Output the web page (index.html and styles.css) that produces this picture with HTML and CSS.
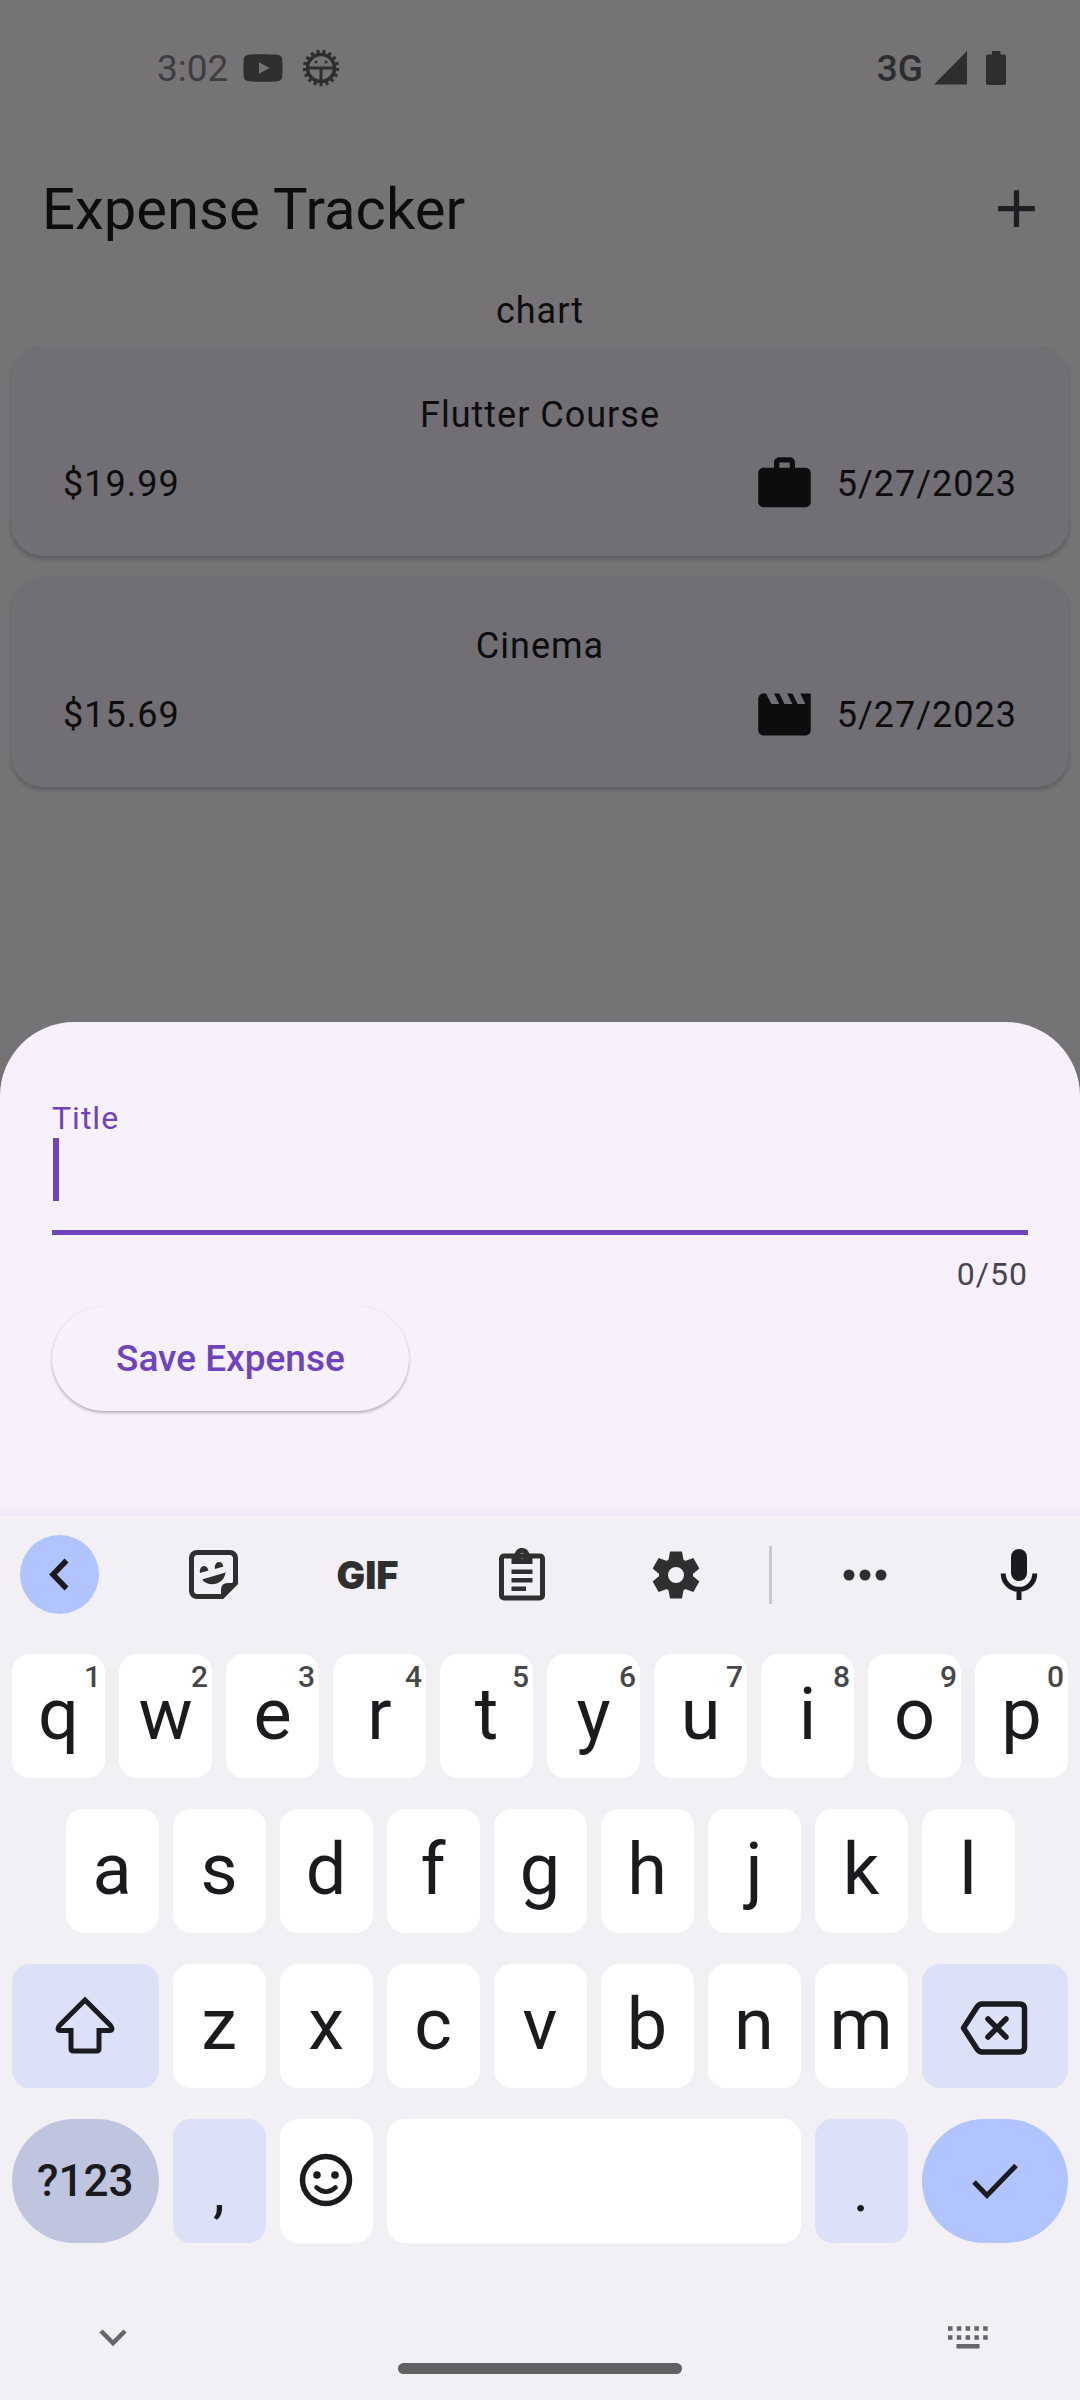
FILE: index.html
```html
<!DOCTYPE html>
<html lang="en">
<head>
<meta charset="utf-8">
<meta name="viewport" content="width=device-width, initial-scale=1">
<title>Expense Tracker</title>
<link rel="stylesheet" href="styles.css">
</head>
<body>
<div class="screen">
  <div class="app">
    <div class="status-bar">
      <div class="status-group">
        <span class="clock">3:02</span>
        <svg class="status-icon" width="40" height="28" viewBox="0 0 40 28" aria-hidden="true"><path fill-rule="evenodd" d="M6 .8C12 0 28 0 34 .8c3.600.5 4.800 1.700 5.200 5 .5 5 .5 11.400 0 16.400-.4 3.300-1.600 4.500-5.200 5-6 .8-22 .8-28 0-3.600-.5-4.800-1.700-5.200-5-.5-5-.5-11.400 0-16.400C1.200 2.500 2.400 1.300 6 .8zM16 8.200v11.600L26.500 14z"/></svg>
        <svg class="status-icon bug" width="38" height="38" viewBox="-19 -19 38 38" aria-hidden="true"><g fill="none" stroke="currentColor"><circle r="13.500" stroke-width="3.500"/><circle r="16.200" stroke-width="4" pathLength="34" stroke-dasharray="1 1"/><path d="M-13 0H13M0 0V14" stroke-width="3"/></g><circle cx="-5" cy="-6" r="1.500"/><circle cx="5" cy="-6" r="1.500"/></svg>
      </div>
      <div class="status-group">
        <span class="network">3G</span>
        <svg class="status-icon" width="33" height="34" viewBox="0 0 33 34" aria-hidden="true"><path d="M33 0v33.500H0z"/></svg>
        <svg class="status-icon battery" width="20" height="34" viewBox="0 0 20 34" aria-hidden="true"><path d="M6 0h8.500v3.500H18a2 2 0 0 1 2 2V32a2 2 0 0 1-2 2H2a2 2 0 0 1-2-2V5.500a2 2 0 0 1 2-2h4z"/></svg>
      </div>
    </div>

    <header class="app-bar">
      <h1 class="app-title">Expense Tracker</h1>
      <button class="add-button" type="button" aria-label="Add expense">
        <svg width="63" height="63" viewBox="0 0 24 24" aria-hidden="true"><path d="M19 13h-6v6h-2v-6H5v-2h6V5h2v6h6v2z"/></svg>
      </button>
    </header>

    <main class="content">
      <p class="chart">chart</p>
      <article class="card">
        <h2 class="card-title">Flutter Course</h2>
        <div class="card-row">
          <span>$19.99</span>
          <div class="card-meta">
            <svg width="63" height="63" viewBox="0 0 24 24" aria-hidden="true"><path d="M20 6h-4V4c0-1.110-.89-2-2-2h-4c-1.110 0-2 .89-2 2v2H4c-1.110 0-1.990.89-1.990 2L2 19c0 1.110.89 2 2 2h16c1.110 0 2-.89 2-2V8c0-1.110-.89-2-2-2zm-6 0h-4V4h4v2z"/></svg>
            <time datetime="2023-05-27">5/27/2023</time>
          </div>
        </div>
      </article>
      <article class="card">
        <h2 class="card-title">Cinema</h2>
        <div class="card-row">
          <span>$15.69</span>
          <div class="card-meta">
            <svg width="63" height="63" viewBox="0 0 24 24" aria-hidden="true"><path d="M18 4l2 4h-3l-2-4h-2l2 4h-3l-2-4H8l2 4H7L5 4H4c-1.100 0-1.990.9-1.990 2L2 18c0 1.100.9 2 2 2h16c1.100 0 2-.9 2-2V4h-4z"/></svg>
            <time datetime="2023-05-27">5/27/2023</time>
          </div>
        </div>
      </article>
    </main>
  </div>

  <form class="sheet">
    <label class="field-label" for="title">Title</label>
    <div class="field">
      <input class="field-input" id="title" type="text" maxlength="50" autocomplete="off">
      <span class="caret"></span>
    </div>
    <p class="counter">0/50</p>
    <button class="save-button" type="button">Save Expense</button>
  </form>

  <section class="keyboard" aria-label="Keyboard">
    <div class="toolbar">
      <div class="tools">
        <button class="tool tool-back" type="button" aria-label="Back"><svg width="79" height="79" viewBox="0 0 79 79" aria-hidden="true"><path d="M46.500 25.500 33 39.500 46.500 53.500" fill="none" stroke="currentColor" stroke-width="5.500"/></svg></button>
        <button class="tool" type="button" aria-label="Stickers"><svg width="49" height="49" viewBox="0 0 49 49" aria-hidden="true"><path d="M33 46.500H8A5.500 5.500 0 0 1 2.500 41V8A5.500 5.500 0 0 1 8 2.500h33A5.500 5.500 0 0 1 46.500 8v25z" fill="none" stroke="currentColor" stroke-width="5"/><path d="M32 49V40q0-7 7-7h9.500V34L34 49zM11 23c-1.500-7 6.500-10 8.500-2.500zM26 19c-1.500-7 6.500-10 8.500-2.500zM13 29.500l23.500-7C35 35.500 19 37.500 13 29.500z"/></svg></button>
        <button class="tool tool-gif" type="button">GIF</button>
        <button class="tool" type="button" aria-label="Clipboard"><svg width="46" height="54" viewBox="0 0 46 54" aria-hidden="true"><rect x="2.500" y="8" width="41" height="42" rx="2.500" fill="none" stroke="currentColor" stroke-width="5"/><path fill-rule="evenodd" d="M12.500 16V6h3C17 1.500 20 0 23 0s6 1.500 7.500 6h3v10zM23 5a2.800 2.800 0 1 0 0 5.600A2.800 2.800 0 0 0 23 5zM12.500 21.500h21V26h-21zM12.500 30h21v4.500h-21zM12.500 38.500H27V43H12.500z"/></svg></button>
        <button class="tool" type="button" aria-label="Settings"><svg width="50" height="50" viewBox="-25 -25 50 50" aria-hidden="true"><circle r="12.500" fill="none" stroke="currentColor" stroke-width="9"/><path d="M-6-23.500H6L8-12H-8z"/><path d="M-6-23.500H6L8-12H-8z" transform="rotate(60)"/><path d="M-6-23.500H6L8-12H-8z" transform="rotate(120)"/><path d="M-6-23.500H6L8-12H-8z" transform="rotate(180)"/><path d="M-6-23.500H6L8-12H-8z" transform="rotate(240)"/><path d="M-6-23.500H6L8-12H-8z" transform="rotate(300)"/></svg></button>
      </div>
      <span class="divider"></span>
      <div class="tools">
        <button class="tool" type="button" aria-label="More"><svg width="44" height="12" viewBox="0 0 44 12" aria-hidden="true"><circle cx="6" cy="6" r="5.500"/><circle cx="22" cy="6" r="5.500"/><circle cx="38" cy="6" r="5.500"/></svg></button>
        <button class="tool tool-mic" type="button" aria-label="Voice input"><svg width="38" height="52" viewBox="0 0 38 52" aria-hidden="true"><rect x="11" y="0" width="16" height="32" rx="8"/><path d="M3.200 24.500a15.800 15.800 0 0 0 31.600 0M19 40v11" fill="none" stroke="currentColor" stroke-width="5"/></svg></button>
      </div>
    </div>

    <div class="keys">
      <button class="key" type="button">q<span class="hint">1</span></button>
      <button class="key" type="button">w<span class="hint">2</span></button>
      <button class="key" type="button">e<span class="hint">3</span></button>
      <button class="key" type="button">r<span class="hint">4</span></button>
      <button class="key" type="button">t<span class="hint">5</span></button>
      <button class="key" type="button">y<span class="hint">6</span></button>
      <button class="key" type="button">u<span class="hint">7</span></button>
      <button class="key" type="button">i<span class="hint">8</span></button>
      <button class="key" type="button">o<span class="hint">9</span></button>
      <button class="key" type="button">p<span class="hint">0</span></button>

      <button class="key key-indent" type="button">a</button>
      <button class="key" type="button">s</button>
      <button class="key" type="button">d</button>
      <button class="key" type="button">f</button>
      <button class="key" type="button">g</button>
      <button class="key" type="button">h</button>
      <button class="key" type="button">j</button>
      <button class="key" type="button">k</button>
      <button class="key" type="button">l</button>

      <button class="key key-wide key-tint" type="button" aria-label="Shift"><svg width="60" height="60" viewBox="0 0 60 60" aria-hidden="true"><path d="M30 5 4.500 30.500C2 33.500 3 35.500 5.500 35.500H16V53.500Q16 56 18.500 56H41.500Q44 56 44 53.500V35.500H54.500c2.500 0 3.500-2 1-5z" fill="none" stroke="currentColor" stroke-width="5"/></svg></button>
      <button class="key" type="button">z</button>
      <button class="key" type="button">x</button>
      <button class="key" type="button">c</button>
      <button class="key" type="button">v</button>
      <button class="key" type="button">b</button>
      <button class="key" type="button">n</button>
      <button class="key" type="button">m</button>
      <button class="key key-wide key-tint" type="button" aria-label="Backspace"><svg width="70" height="60" viewBox="0 0 70 60" aria-hidden="true"><g fill="none" stroke="currentColor" stroke-width="5.500" stroke-linejoin="round"><path d="M3.500 33 17 12Q19 9 22 9H59.500Q64.500 9 64.500 14V52Q64.500 57 59.500 57H22Q19 57 17 54z"/><path d="M28 24 46 42M46 24 28 42" stroke-linecap="round"/></g></svg></button>

      <button class="key key-wide key-symbols" type="button">?123</button>
      <button class="key key-tint key-punct" type="button">,</button>
      <button class="key" type="button" aria-label="Emoji"><svg width="54" height="54" viewBox="-27 -27 54 54" aria-hidden="true"><circle r="23.500" fill="none" stroke="currentColor" stroke-width="5.500"/><circle cx="-9" cy="-5" r="3.800"/><circle cx="9" cy="-5" r="3.800"/><path d="M-9.500 7.500Q0 16 9.500 7.500" fill="none" stroke="currentColor" stroke-width="4.500" stroke-linecap="round"/></svg></button>
      <button class="key key-space" type="button" aria-label="Space"></button>
      <button class="key key-tint key-punct" type="button">.</button>
      <button class="key key-wide key-enter" type="button" aria-label="Done"><svg width="50" height="50" viewBox="0 0 50 50" aria-hidden="true"><path d="M4 27 17 40.500 46 10.500" fill="none" stroke="currentColor" stroke-width="5"/></svg></button>
    </div>

    <nav class="nav-bar">
      <button class="nav-button" type="button" aria-label="Hide keyboard"><svg width="63" height="63" viewBox="0 0 63 63" aria-hidden="true"><path d="M20 26 32 38 44 26" fill="none" stroke="currentColor" stroke-width="4.500"/></svg></button>
      <span class="home-handle"></span>
      <button class="nav-button" type="button" aria-label="Switch keyboard"><svg width="63" height="63" viewBox="0 0 63 63" aria-hidden="true"><path d="M12 23.500h40M12 32.500h40" fill="none" stroke="currentColor" stroke-width="4.500" stroke-dasharray="4.500 4.300"/><path d="M20.500 39h23v4.500h-23z"/></svg></button>
    </nav>
  </section>
</div>
</body>
</html>
```

FILE: styles.css
```css
* {
  box-sizing: border-box;
}

body {
  margin: 0;
  background: #757375;
  font-family: Roboto, "Liberation Sans", sans-serif;
  color: #0d0d0e;
}

h1,
h2,
p {
  margin: 0;
  font-weight: 400;
}

button {
  margin: 0;
  padding: 0;
  border: 0;
  background: none;
  color: inherit;
  font: inherit;
}

svg {
  display: block;
  fill: currentColor;
}

.screen {
  display: flex;
  flex-direction: column;
  min-height: 100vh;
}

.app {
  flex: 1;
}

/* Status bar */

.status-bar {
  display: flex;
  justify-content: space-between;
  height: 136px;
  padding: 0 74px 0 157px;
  color: #2e2e2e;
}

.status-group {
  display: flex;
  align-items: center;
}

.clock {
  margin-right: 15px;
  font-size: 37px;
  color: #3e3e3f;
}

.bug {
  margin-left: 19px;
}

.network {
  margin-right: 11px;
  font-size: 37px;
  font-weight: 500;
}

.battery {
  margin-left: 19px;
}

/* App bar */

.app-bar {
  display: flex;
  align-items: center;
  justify-content: space-between;
  height: 145px;
  padding: 0 32px 0 42px;
}

.app-title {
  font-size: 58px;
}

.add-button {
  color: #1f1f23;
}

/* Expense list */

.content {
  padding-top: 4px;
  font-size: 36px;
  line-height: 52px;
  letter-spacing: 1px;
}

.chart {
  text-align: center;
}

.card {
  margin: 9px 11px 21px;
  padding: 43px 52px 41px;
  border-radius: 32px;
  background: #716f74;
  box-shadow: 0 3px 4px rgba(0, 0, 0, 0.2);
}

.card-title {
  margin-bottom: 11px;
  font-size: 36px;
  text-align: center;
}

.card-row,
.card-meta {
  display: flex;
  align-items: center;
}

.card-row {
  justify-content: space-between;
}

.card-meta {
  gap: 21px;
}

/* New expense sheet */

.sheet {
  padding: 77px 52px 105px;
  border-radius: 74px 74px 0 0;
  background: linear-gradient(to top, #eee7f4, #f7f1fc 8px);
  color: #6f43c0;
}

.field-label {
  display: block;
  font-size: 32px;
  line-height: 39px;
  letter-spacing: 1px;
}

.field {
  position: relative;
}

.field-input {
  display: block;
  width: 100%;
  height: 97px;
  padding: 0 0 28px;
  border: 0;
  border-bottom: 5px solid #6f43c0;
  outline: 0;
  background: none;
  color: #1c1b1f;
  font: 400 42px Roboto, "Liberation Sans", sans-serif;
}

.caret {
  position: absolute;
  top: 0;
  left: 1px;
  width: 6px;
  height: 63px;
  background: #6f43c0;
}

.counter {
  margin: 20px 0 13px;
  font-size: 32px;
  line-height: 38px;
  letter-spacing: 1px;
  text-align: right;
  color: #49454f;
}

.save-button {
  display: block;
  height: 105px;
  padding: 0 64px;
  border-radius: 53px;
  background: #f7f1fc;
  box-shadow: 0 2px 3px rgba(0, 0, 0, 0.26), 0 0 1px rgba(0, 0, 0, 0.1);
  font-size: 37px;
  font-weight: 500;
}

/* Keyboard */

.keyboard {
  background: #f2eff5;
  color: #1b1b1f;
}

.toolbar {
  display: flex;
  align-items: center;
  justify-content: space-between;
  padding: 19px 22px 40px 20px;
}

.tools {
  display: flex;
  gap: 75px;
}

.tool {
  display: flex;
  align-items: center;
  justify-content: center;
  width: 79px;
  height: 79px;
  color: #2f2f30;
}

.tool-back {
  border-radius: 50%;
  background: #b2c4ff;
  color: #1b1b1f;
}

.tool-gif {
  font-family: Inter, Roboto, sans-serif;
  font-size: 38px;
  font-weight: 900;
}

.tool-mic {
  color: #1b1b1f;
}

.divider {
  width: 3px;
  height: 58px;
  background: #cac8ce;
}

.keys {
  display: grid;
  grid-template-columns: repeat(20, minmax(0, 1fr));
  grid-auto-rows: 124px;
  gap: 31px 14px;
  padding: 0 12px;
}

.key {
  position: relative;
  display: flex;
  align-items: center;
  justify-content: center;
  grid-column: span 2;
  padding-bottom: 3px;
  border-radius: 18px;
  background: #fff;
  font-size: 72px;
  line-height: 84px;
}

.key-indent {
  grid-column: 2 / span 2;
}

.key-wide {
  grid-column: span 3;
}

.key-space {
  grid-column: span 8;
}

.key-tint {
  background: #dde1f8;
}

.key-symbols {
  padding-bottom: 0;
  border-radius: 62px;
  background: #c0c5df;
  font-size: 44px;
  font-weight: 500;
}

.key-enter {
  border-radius: 62px;
  background: #b2c4ff;
}

.key-punct {
  padding-top: 22px;
  font-size: 60px;
}

.hint {
  position: absolute;
  top: 7px;
  right: 4px;
  font-size: 30px;
  font-weight: 500;
  line-height: 32px;
  color: #474749;
}

/* System navigation */

.nav-bar {
  display: flex;
  justify-content: space-between;
  padding: 62px 81px 26px;
}

.nav-button {
  height: 69px;
  padding-bottom: 6px;
  color: #666567;
}

.home-handle {
  align-self: flex-end;
  width: 284px;
  height: 11px;
  border-radius: 6px;
  background: #616163;
}
```
